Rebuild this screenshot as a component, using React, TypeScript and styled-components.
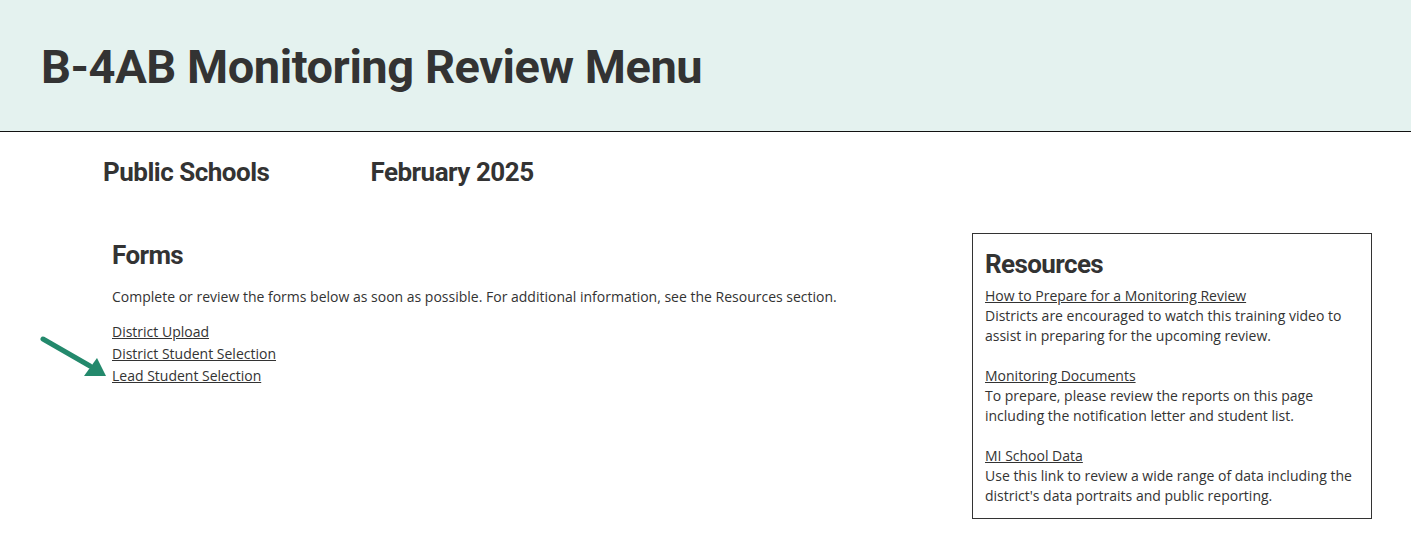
import React from 'react';
import styled, { createGlobalStyle } from 'styled-components';

const GlobalStyle = createGlobalStyle`
  body {
    margin: 0;
    background: #fff;
    font-family: "Open Sans", "Liberation Sans", sans-serif;
    color: #333;
  }
`;

const resources = [
  {
    title: 'How to Prepare for a Monitoring Review',
    text: 'Districts are encouraged to watch this training video to assist in preparing for the upcoming review.',
  },
  {
    title: 'Monitoring Documents',
    text: 'To prepare, please review the reports on this page including the notification letter and student list.',
  },
  {
    title: 'MI School Data',
    text: "Use this link to review a wide range of data including the district's data portraits and public reporting.",
  },
];

const forms = ['District Upload', 'District Student Selection', 'Lead Student Selection'];

const App: React.FC = () => {
  return (
    <>
      <GlobalStyle />
      <Banner>
        <PageTitle>B-4AB Monitoring Review Menu</PageTitle>
      </Banner>
      <Info>
        <InfoItem>Public Schools</InfoItem>
        <InfoItem>February 2025</InfoItem>
      </Info>
      <Main>
        <FormsSection>
          <SectionTitle>Forms</SectionTitle>
          <Intro>
            Complete or review the forms below as soon as possible. For additional information, see the Resources section.
          </Intro>
          <LinkList>
            {forms.map((f) => (
              <li key={f}>
                <TextLink href="#">{f}</TextLink>
              </li>
            ))}
          </LinkList>
          <Arrow width="70" height="44" viewBox="0 0 70 44">
            <line x1="3" y1="3" x2="50" y2="30" stroke="#23896c" strokeWidth="5" strokeLinecap="round" />
            <polygon points="66,40 44,40 57,22" fill="#23896c" />
          </Arrow>
        </FormsSection>
        <ResourceBox>
          <BoxTitle>Resources</BoxTitle>
          {resources.map((r) => (
            <Resource key={r.title}>
              <TextLink href="#">{r.title}</TextLink>
              <br />
              {r.text}
            </Resource>
          ))}
        </ResourceBox>
      </Main>
    </>
  );
};

export default App;

const Banner = styled.header`
  background-color: #e4f2ef;
  border-bottom: 1px solid #111;
  height: 132px;
  display: flex;
  align-items: center;
  padding-left: 41px;
  box-sizing: border-box;
`;

const PageTitle = styled.h1`
  margin: 0;
  padding-top: 1px;
  font-family: Roboto, "Liberation Sans", sans-serif;
  font-weight: 700;
  font-size: 47px;
  letter-spacing: -0.45px;
  color: #333;
`;

const Info = styled.div`
  display: flex;
  gap: 101px;
  padding: 23px 0 0 103px;
`;

const InfoItem = styled.h2`
  margin: 0;
  font-family: Roboto, "Liberation Sans", sans-serif;
  font-weight: 700;
  font-size: 26px;
  letter-spacing: -0.5px;
  line-height: 34px;
  color: #333;
`;

const Main = styled.main`
  display: flex;
  justify-content: space-between;
  align-items: flex-start;
  padding: 44px 39px 0 112px;
`;

const FormsSection = styled.section`
  position: relative;
  padding-top: 7px;
`;

const SectionTitle = styled.h2`
  margin: 0;
  font-family: Roboto, "Liberation Sans", sans-serif;
  font-weight: 700;
  font-size: 26px;
  letter-spacing: -0.6px;
  line-height: 30px;
  color: #333;
`;

const Intro = styled.p`
  margin: 16px 0 13px;
  font-size: 14px;
  line-height: 22px;
`;

const LinkList = styled.ul`
  list-style: none;
  margin: 0;
  padding: 0;
  font-size: 14px;
  line-height: 22px;
`;

const TextLink = styled.a`
  color: #333;
  text-decoration: underline;
`;

const Arrow = styled.svg`
  position: absolute;
  left: -72px;
  top: 103px;
`;

const ResourceBox = styled.aside`
  width: 400px;
  box-sizing: border-box;
  border: 1px solid #333;
  padding: 14px 12px 12px;
  font-size: 14px;
  line-height: 20px;
`;

const BoxTitle = styled.h2`
  margin: 0 0 6px;
  font-family: Roboto, "Liberation Sans", sans-serif;
  font-weight: 700;
  font-size: 26px;
  letter-spacing: -0.6px;
  line-height: 32px;
  color: #333;
`;

const Resource = styled.p`
  margin: 0 0 20px;
  &:last-child {
    margin-bottom: 0;
  }
`;
